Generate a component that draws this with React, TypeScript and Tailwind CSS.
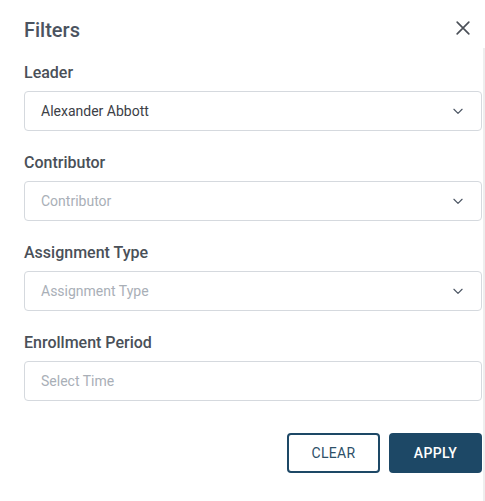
import React from 'react'

const font = { fontFamily: 'Roboto, "Liberation Sans", sans-serif' }

const Chevron = () => (
  <svg width="14" height="14" viewBox="0 0 24 24" fill="none" stroke="#4b5563" strokeWidth="2" strokeLinecap="round" strokeLinejoin="round">
    <path d="M5 9l7 7 7-7" />
  </svg>
)

const Field = ({ label, value, placeholder, select = true }: { label: string; value?: string; placeholder: string; select?: boolean }) => (
  <div className="flex flex-col">
    <div className="text-[16px] font-medium text-[#4a5058] leading-[20px] h-[20px] mb-[8px]">{label}</div>
    <div className="h-[40px] border border-[#d5d9de] rounded-[4px] flex items-center justify-between pl-[16px] pr-[16px]">
      <span className={`text-[14px] ${value ? 'text-[#3c4046]' : 'text-[#a9afb7]'}`}>{value || placeholder}</span>
      {select && <Chevron />}
    </div>
  </div>
)

const App: React.FC = () => {
  return (
    <div className="w-[485px] h-[501px] bg-white flex flex-col" style={font}>
      {/* Header */}
      <div className="flex items-center justify-between pl-[24px] pr-[12px] pt-[12px] h-[48px]">
        <h2 className="text-[20px] font-medium text-[#4b5360] leading-[24px]">Filters</h2>
        <svg width="20" height="20" viewBox="0 0 24 24" fill="none" stroke="#4b5058" strokeWidth="2" strokeLinecap="round" className="mt-[-4px]">
          <path d="M5 5l14 14M19 5L5 19" />
        </svg>
      </div>

      <div className="flex flex-1">
        <div className="flex-1 pl-[24px] pr-[1px] pt-[15px] flex flex-col gap-[22px]">
          <Field label="Leader" value="Alexander Abbott" placeholder="Leader" />
          <Field label="Contributor" placeholder="Contributor" />
          <Field label="Assignment Type" placeholder="Assignment Type" />
          <Field label="Enrollment Period" placeholder="Select Time" select={false} />
          <div className="flex justify-end gap-[9px] mt-[10px]">
            <button className="w-[93px] h-[40px] border-2 border-[#1d4866] rounded-[4px] text-[14px] text-[#2d4f68] tracking-wide">
              CLEAR
            </button>
            <button className="w-[93px] h-[40px] bg-[#1d4866] rounded-[4px] text-[14px] font-medium text-white tracking-wide">
              APPLY
            </button>
          </div>
        </div>
        <div className="w-[2px] bg-[#eeeeee]" />
      </div>
    </div>
  )
}

export default App
